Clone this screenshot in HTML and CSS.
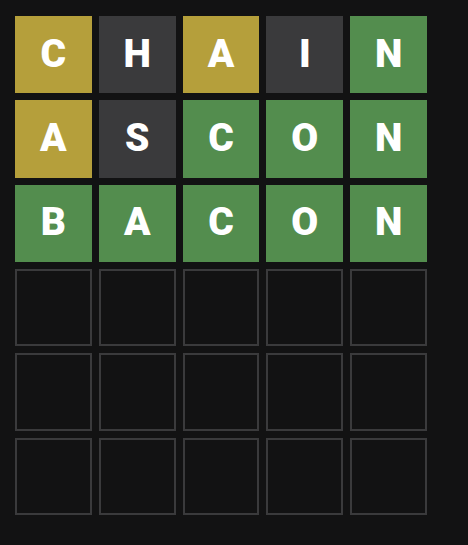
FILE: index.html
```html
<!DOCTYPE html>
<html>
<head>
<meta charset="utf-8">
<link rel="stylesheet" href="styles.css">
</head>
<body>
<div class="board">
  <div class="tile present">C</div>
  <div class="tile absent">H</div>
  <div class="tile present">A</div>
  <div class="tile absent">I</div>
  <div class="tile correct">N</div>

  <div class="tile present">A</div>
  <div class="tile absent">S</div>
  <div class="tile correct">C</div>
  <div class="tile correct">O</div>
  <div class="tile correct">N</div>

  <div class="tile correct">B</div>
  <div class="tile correct">A</div>
  <div class="tile correct">C</div>
  <div class="tile correct">O</div>
  <div class="tile correct">N</div>

  <div class="tile empty"></div>
  <div class="tile empty"></div>
  <div class="tile empty"></div>
  <div class="tile empty"></div>
  <div class="tile empty"></div>

  <div class="tile empty"></div>
  <div class="tile empty"></div>
  <div class="tile empty"></div>
  <div class="tile empty"></div>
  <div class="tile empty"></div>

  <div class="tile empty"></div>
  <div class="tile empty"></div>
  <div class="tile empty"></div>
  <div class="tile empty"></div>
  <div class="tile empty"></div>
</div>
</body>
</html>
```

FILE: styles.css
```css
html, body {
  margin: 0;
  background: #121213;
  height: 100%;
}
body {
  padding: 16px 0 0 15px;
  box-sizing: border-box;
  font-family: Roboto, "Liberation Sans", sans-serif;
}
.board {
  width: 412px;
  height: 499px;
  display: grid;
  grid-template-columns: repeat(5, 1fr);
  grid-template-rows: repeat(6, 1fr);
  gap: 7px;
}
.tile {
  display: flex;
  align-items: center;
  justify-content: center;
  color: #ffffff;
  font-weight: 900;
  font-size: 39px;
  line-height: 1;
  padding-bottom: 1px;
  box-sizing: border-box;
}
.present { background: #b59f3b; }
.absent { background: #3a3a3c; }
.correct { background: #538d4e; }
.empty { border: 2px solid #3a3a3c; }
```
